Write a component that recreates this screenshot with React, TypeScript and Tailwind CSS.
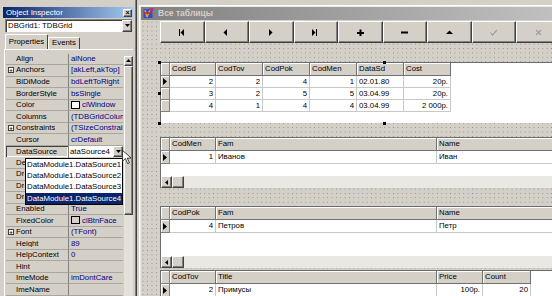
import React from 'react';

type Prop = { n: string; v: string; plus?: boolean; swatch?: string; sel?: boolean; hid?: boolean };

const props: Prop[] = [
  { n: 'Align', v: 'alNone' },
  { n: 'Anchors', v: '[akLeft,akTop]', plus: true },
  { n: 'BiDiMode', v: 'bdLeftToRight' },
  { n: 'BorderStyle', v: 'bsSingle' },
  { n: 'Color', v: 'clWindow', swatch: '#ffffff' },
  { n: 'Columns', v: '(TDBGridColumns)' },
  { n: 'Constraints', v: '(TSizeConstraints)', plus: true },
  { n: 'Cursor', v: 'crDefault' },
  { n: 'DataSource', v: 'ataSource4', sel: true },
  { n: 'De', v: '', hid: true },
  { n: 'Dr', v: '', hid: true },
  { n: 'Dr', v: '', hid: true },
  { n: 'Dr', v: '', hid: true },
  { n: 'Enabled', v: 'True' },
  { n: 'FixedColor', v: 'clBtnFace', swatch: '#d4d0c8' },
  { n: 'Font', v: '(TFont)', plus: true },
  { n: 'Height', v: '89' },
  { n: 'HelpContext', v: '0' },
  { n: 'Hint', v: '' },
  { n: 'ImeMode', v: 'imDontCare' },
  { n: 'ImeName', v: '' },
];

const raised = 'bg-[#d4d0c8] border-t border-l border-white border-r border-b border-r-[#404040] border-b-[#404040] shadow-[inset_-1px_-1px_0_#808080]';

function DownArrow() {
  return (
    <svg width="5" height="3" viewBox="0 0 5 3">
      <path d="M0 0h5L2.5 3z" fill="#000" />
    </svg>
  );
}

function Inspector() {
  return (
    <div className="relative w-[137px] h-full shrink-0 flex flex-col pt-[7px] pl-[3px] pr-[3px] border-r border-[#404040] shadow-[inset_-1px_0_0_#808080]">
      <div className="h-[12px] flex items-center justify-between pl-[3px] pr-[1px] bg-[linear-gradient(90deg,#0a246a,#a6caf0)] text-white">
        <span>Object Inspector</span>
        <div className={`w-[9px] h-[8px] ${raised} flex items-center justify-center text-[7px] leading-none text-black font-bold`}>×</div>
      </div>
      <div className="mt-[1px] ml-[2px] mr-[1px] h-[13px] flex bg-white border-t border-l border-[#808080] shadow-[inset_1px_1px_0_#404040]">
        <span className="flex-1 pl-[2px] flex items-center text-black">DBGrid1: TDBGrid</span>
        <div className={`w-[10px] ${raised} flex items-center justify-center`}>
          <DownArrow />
        </div>
      </div>
      <div className="mt-[2px] h-[15px] flex items-end pl-[2px]">
        <div className="h-[15px] w-[43px] flex items-center justify-center border-t border-l border-white border-r border-r-[#404040] rounded-t-[2px]">Properties</div>
        <div className="h-[12px] w-[32px] flex items-center justify-center border-t border-l border-white border-r border-r-[#404040] rounded-t-[2px]">Events</div>
      </div>
      <div className="flex-1 ml-[1px] border-t border-l border-white pt-[4px] pl-[1px] flex">
        <div className="w-[117px] flex flex-col">
          {props.map((p, i) => (
            <div key={i} className="h-[11.55px] shrink-0 flex">
              <div
                className={`w-[63px] shrink-0 relative flex items-center pl-[10px] border-r border-[#808080] ${
                  p.sel ? 'shadow-[inset_1px_1px_0_#404040,inset_-1px_-1px_0_#fff]' : 'border-b border-b-[#aaa69e]'
                }`}
              >
                {p.plus && (
                  <div className="absolute left-[2px] top-1/2 -translate-y-1/2 w-[6px] h-[6px] border border-[#404040] bg-white flex items-center justify-center text-[6px] leading-none font-bold">
                    +
                  </div>
                )}
                <span className="whitespace-nowrap overflow-hidden">{p.n}</span>
              </div>
              {p.sel ? (
                <div className="w-[54px] flex">
                  <div className="flex-1 bg-white flex items-center pl-[1px] text-black overflow-hidden whitespace-nowrap">{p.v}</div>
                  <div className={`w-[10px] ${raised} flex items-center justify-center`}>
                    <DownArrow />
                  </div>
                </div>
              ) : (
                <div className="w-[54px] flex items-center pl-[2px] border-b border-[#aaa69e] text-[#000080] whitespace-nowrap overflow-hidden">
                  {p.swatch && (
                    <div className="w-[9px] h-[8px] shrink-0 border border-black mr-[2px]" style={{ background: p.swatch }} />
                  )}
                  {p.v}
                </div>
              )}
            </div>
          ))}
        </div>
        <div className="w-[11px] ml-[1px] flex flex-col">
          <div className={`h-[10px] mt-[2px] ${raised} flex items-center justify-center`}>
            <svg width="5" height="3" viewBox="0 0 5 3">
              <path d="M0 3h5L2.5 0z" fill="#000" />
            </svg>
          </div>
          <div className={`h-[149px] ${raised}`} />
          <div className="flex-1 bg-[#e4e1db]" />
        </div>
      </div>

      <div className="absolute left-[25px] top-[158px] w-[98px] bg-white border border-black flex flex-col">
        {['DataModule1.DataSource1', 'DataModule1.DataSource2', 'DataModule1.DataSource3', 'DataModule1.DataSource4'].map((s, i) => (
          <div
            key={s}
            className={`h-[11.3px] flex items-center pl-[1px] whitespace-nowrap ${i === 3 ? 'bg-[#0a246a] text-white' : 'text-black'}`}
          >
            {s}
          </div>
        ))}
      </div>

      <svg className="absolute left-[122px] top-[150px]" width="9" height="14" viewBox="0 0 12 19">
        <path d="M0.5 0.5v15l4-4 3 7 2.5-1-3-6.5h5.5z" fill="#fff" stroke="#000" strokeWidth="1" />
      </svg>
    </div>
  );
}

type Col = { t: string; w: number; r?: boolean };

function Indicator({ active, h }: { active?: boolean; h: number }) {
  return (
    <div
      className="w-[9px] shrink-0 bg-[#d4d0c8] border-r border-b border-[#808080] shadow-[inset_1px_1px_0_#fff] flex items-center justify-center"
      style={{ height: h }}
    >
      {active && (
        <svg width="4" height="7" viewBox="0 0 4 7">
          <path d="M0 0l4 3.5L0 7z" fill="#000" />
        </svg>
      )}
    </div>
  );
}

function Grid({
  cols,
  rows,
  rowH,
  height,
  scroll,
}: {
  cols: Col[];
  rows: string[][];
  rowH: number;
  height: number;
  scroll?: boolean;
}) {
  return (
    <div className="w-[400px] bg-white border-t border-l border-[#6b6b6b] flex flex-col overflow-hidden" style={{ height }}>
      <div className="h-[13px] shrink-0 flex">
        <Indicator h={13} />
        {cols.map((c) => (
          <div
            key={c.t}
            className="shrink-0 h-[13px] bg-[#d4d0c8] border-r border-b border-[#707070] shadow-[inset_1px_1px_0_#fff] pl-[2px] flex items-center"
            style={{ width: c.w }}
          >
            {c.t}
          </div>
        ))}
      </div>
      {rows.map((r, i) => (
        <div key={i} className="shrink-0 flex" style={{ height: rowH }}>
          <Indicator h={rowH} active={i === 0} />
          {cols.map((c, j) => (
            <div
              key={c.t}
              className={`shrink-0 h-full border-r border-b border-[#c8c8c8] px-[2px] flex items-center whitespace-nowrap ${
                c.r ? 'justify-end' : ''
              }`}
              style={{ width: c.w }}
            >
              {r[j]}
            </div>
          ))}
        </div>
      ))}
      <div className="flex-1" />
      {scroll && (
        <div className="h-[12px] shrink-0 flex bg-[#eae8e2]">
          <div className={`w-[11px] ${raised} flex items-center justify-center`}>
            <svg width="3" height="5" viewBox="0 0 3 5">
              <path d="M3 0v5L0 2.5z" fill="#000" />
            </svg>
          </div>
          <div className={`w-[12px] ${raised}`} />
        </div>
      )}
    </div>
  );
}

function Glyph({ k }: { k: number }) {
  const g = [
    <path key="a" d="M0 0h1v7H0zM5 0v7L1.5 3.5z" fill="#000" />,
    <path key="b" d="M4 0v7L0.5 3.5z" fill="#000" />,
    <path key="c" d="M1 0v7l3.5-3.5z" fill="#000" />,
    <path key="d" d="M0 0v7l3.5-3.5zM4 0h1v7H4z" fill="#000" />,
    <path key="e" d="M2.5 0.5h2v2.5h2.5v2h-2.5v2.5h-2v-2.5H0v-2h2.5z" fill="#000" />,
    <path key="f" d="M0 2.5h7v2H0z" fill="#000" />,
    <path key="g" d="M3.5 1.5L7 5H0z" fill="#000" />,
    <path key="h" d="M0.5 3.5l2 2.5L7 1" fill="none" stroke="#a0a0a0" strokeWidth="1.2" />,
    <path key="i" d="M1 1l5 5M6 1L1 6" fill="none" stroke="#a0a0a0" strokeWidth="1.3" />,
  ];
  return (
    <svg width="7" height="7" viewBox="0 0 7 7">
      {g[k]}
    </svg>
  );
}

function Handle({ cls }: { cls: string }) {
  return <div className={`absolute w-[3px] h-[3px] bg-black ${cls}`} />;
}

function FormWindow() {
  return (
    <div className="flex-1 h-full pl-[2px] pt-[5px] overflow-hidden">
      <div className="h-full border-l border-t border-white pl-[1px] pt-[1px] shadow-[inset_1px_1px_0_#eceae4] flex flex-col">
        <div className="h-[13px] shrink-0 flex items-center pl-[2px] bg-[linear-gradient(90deg,#808080,#c0c0c0)]">
          <svg width="11" height="11" viewBox="0 0 11 11">
            <rect x="0.5" y="1" width="9" height="9" fill="#3050c8" />
            <path d="M2 2l2 7M7 2L4 9" stroke="#e8a020" strokeWidth="1.5" />
            <path d="M1 5h8" stroke="#d02020" strokeWidth="1.3" />
            <rect x="6.5" y="0" width="4" height="3" fill="#c03080" />
          </svg>
          <span className="ml-[4px] text-[8.5px] font-bold text-[#d4d0c8]">Все таблицы</span>
        </div>
        <div className="flex-1 bg-[#d4d0c8] bg-[radial-gradient(#8c8a86_0.6px,transparent_0.75px)] bg-[length:4.4px_4.4px] pl-[19px] flex flex-col">
          <div className="mt-[1px] h-[22px] shrink-0 flex">
            {Array.from({ length: 9 }).map((_, i) => (
              <div key={i} className={`w-[44.5px] shrink-0 h-full ${raised} flex items-center justify-center`}>
                <Glyph k={i} />
              </div>
            ))}
          </div>
          <div className="relative mt-[19px] shrink-0">
            <Grid
              cols={[
                { t: 'CodSd', w: 46, r: true },
                { t: 'CodTov', w: 47, r: true },
                { t: 'CodPok', w: 47, r: true },
                { t: 'CodMen', w: 47, r: true },
                { t: 'DataSd', w: 47 },
                { t: 'Cost', w: 47, r: true },
              ]}
              rows={[
                ['2', '2', '4', '1', '02.01.80', '20р.'],
                ['3', '2', '5', '5', '03.04.99', '20р.'],
                ['4', '1', '4', '4', '03.04.99', '2 000р.'],
              ]}
              rowH={12}
              height={61}
            />
            <Handle cls="left-[-2px] top-[-1px]" />
            <Handle cls="left-[-2px] top-[30px]" />
            <Handle cls="left-[-2px] bottom-[-2px]" />
            <Handle cls="left-[223px] top-[-1px]" />
            <Handle cls="left-[223px] bottom-[-2px]" />
          </div>
          <div className="mt-[14px] shrink-0">
            <Grid
              cols={[
                { t: 'CodMen', w: 46, r: true },
                { t: 'Fam', w: 221 },
                { t: 'Name', w: 120 },
              ]}
              rows={[['1', 'Иванов', 'Иван']]}
              rowH={13}
              height={51}
              scroll
            />
          </div>
          <div className="mt-[18px] shrink-0">
            <Grid
              cols={[
                { t: 'CodPok', w: 46, r: true },
                { t: 'Fam', w: 221 },
                { t: 'Name', w: 120 },
              ]}
              rows={[['4', 'Петров', 'Петр']]}
              rowH={13}
              height={62}
              scroll
            />
          </div>
          <div className="mt-[2px] shrink-0">
            <Grid
              cols={[
                { t: 'CodTov', w: 46, r: true },
                { t: 'Title', w: 221 },
                { t: 'Price', w: 46, r: true },
                { t: 'Count', w: 48, r: true },
              ]}
              rows={[['2', 'Примусы', '100р.', '20']]}
              rowH={13}
              height={40}
            />
          </div>
        </div>
      </div>
    </div>
  );
}

export default function App() {
  return (
    <div className="w-[552px] h-[296px] overflow-hidden flex bg-[#d4d0c8] text-black text-[7.8px] leading-none font-['Liberation_Sans',Arial,sans-serif]">
      <Inspector />
      <FormWindow />
    </div>
  );
}
